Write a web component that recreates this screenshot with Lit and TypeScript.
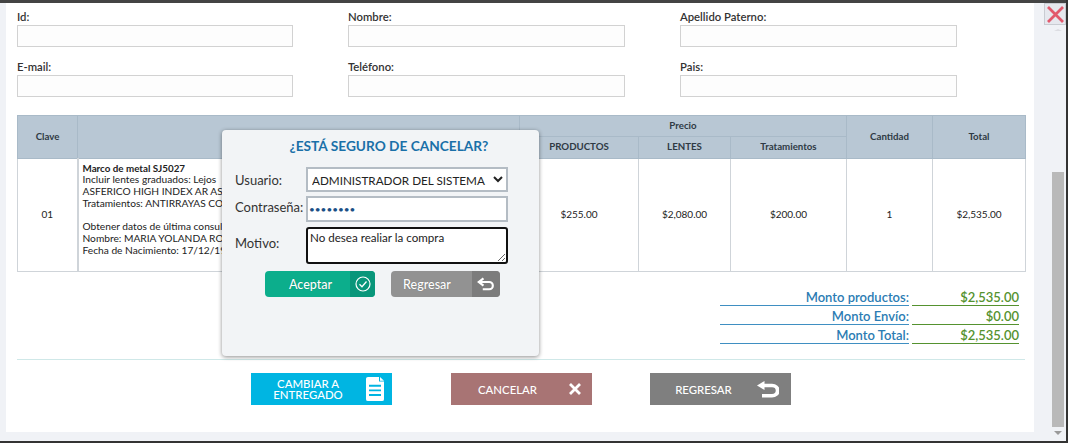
import { LitElement, html, css, svg } from "lit";
import { customElement } from "lit/decorators.js";

const backArrow = (color: string, w: number) => svg`<svg class="ico" width="${w}" height="${w * 0.8}" viewBox="0 0 25 20" fill="none"><path d="M9 2 L2.5 7 L9 12" fill="none" stroke="${color}" stroke-width="3" stroke-linejoin="miter"/><path d="M4 7 H17 a5 5 0 0 1 0 10 H8" fill="none" stroke="${color}" stroke-width="3"/></svg>`;

@customElement("app-root")
export class AppRoot extends LitElement {
  static styles = css`
    :host { display: block; width: 1068px; height: 443px; position: relative; overflow: hidden; background: #f0f2f6; font-family: Lato, "Open Sans", sans-serif; color: #222; }
    * { box-sizing: border-box; }
    .top { height: 3px; background: #444; }
    .bottom { position: absolute; left: 0; right: 0; bottom: 0; height: 2px; background: #333; }
    .edge { position: absolute; top: 0; right: 0; bottom: 0; width: 2px; background: #333; }
    .panel { margin-left: 6px; width: 1028px; height: 429px; background: #fff; padding: 8px 9px 0 11px; }
    .form { display: grid; grid-template-columns: 276px 277px 277px; column-gap: 55px; row-gap: 6px; }
    .field { display: flex; flex-direction: column; height: 44px; }
    .field label { font-size: 11.3px; line-height: 12px; font-weight: 600; color: #333; height: 14px; }
    .field input { width: 100%; height: 22px; border: 1.5px solid #d2d2d2; background: #fdfdfd; outline: none; }
    table { margin-top: 10px; width: 1008px; border-collapse: collapse; table-layout: fixed; border: 1px solid #cfd4d9; font-size: 10px; }
    th { background: #b8c7d4; font-weight: 700; color: #2f3a44; font-size: 9.7px; border: 1px solid #a9bac8; padding: 0 0 2px; height: 21.3px; }
    td { border: 1px solid #cfd4d9; text-align: center; color: #222; font-size: 10px; height: 113px; padding: 0 0 2px; }
    td.desc { text-align: left; padding: 4px 5px 0 4px; vertical-align: top; font-size: 10.2px; line-height: 11.7px; border-left-width: 2px; white-space: nowrap; overflow: hidden; }
    td.desc b { font-weight: 700; font-size: 9.8px; }
    .summary { display: grid; grid-template-columns: 189px 107px; column-gap: 3px; justify-content: end; margin: 15px 6px 0 0; font-size: 13px; font-weight: 600; }
    .summary div { height: 19.3px; line-height: 20px; text-align: right; }
    .k { color: #2b7cb3; border-bottom: 1px solid #3f8fc2; }
    .v { color: #55922f; border-bottom: 1px solid #55922f; }
    hr { border: 0; height: 1px; background: #cfe8e8; margin: 15px 0 0; }
    .actions { display: flex; margin: 13px 0 0 234px; gap: 58.5px; }
    .act { width: 141px; height: 32px; display: flex; align-items: center; color: #fff; font-size: 11.4px; font-weight: 500; border: 0; padding: 0; font-family: inherit; }
    .act span { flex: 1; text-align: center; line-height: 11.5px; padding-left: 7px; }
    .act .slot { flex: none; width: 34px; display: flex; justify-content: center; }
    .act .wide { width: 41px; padding-right: 6px; }
    .blue { background: #00b5e2; }
    .red { background: #a87474; }
    .gray { background: #7f7f7f; }
    .dialog { position: absolute; left: 222px; top: 130px; width: 317px; height: 226px; background: #f2f4f6; border-radius: 4px; box-shadow: 0 1px 4px rgba(0,0,0,.45); padding: 0 31px 0 13px; }
    h2 { margin: 7px 0 0; font-size: 13.7px; line-height: 18px; font-weight: 700; color: #1a70a8; text-align: center; padding-left: 35px; white-space: nowrap; }
    .row { display: flex; align-items: center; }
    .row label { width: 71px; font-size: 13px; color: #333; flex: none; }
    .r1 { margin-top: 12px; height: 25px; }
    .r2 { margin-top: 4px; height: 26px; }
    .r2 label { padding-bottom: 4px; }
    .r3 { margin-top: 5px; height: 37px; }
    .r3 label { padding-bottom: 6px; }
    .sel { flex: 1; min-width: 0; height: 25px; border: 2px solid #b4bcc4; background: #fff; font: 11.7px Lato, sans-serif; color: #222; padding: 0; border-radius: 0; }
    .pw { flex: 1; min-width: 0; height: 26px; border: 2px solid #b4bcc4; background: #fff; font: 10px Lato, sans-serif; color: #1a4f86; padding: 0 0 0 1px; outline: none; }
    textarea { flex: 1; min-width: 0; height: 37px; border: 2px solid #111; border-radius: 3px; background: #fff; font: 11.6px/14px Lato, sans-serif; color: #222; padding: 2px 2px 0; outline: none; }
    .btns { display: flex; margin: 7px 0 0 30px; gap: 16px; }
    .b { height: 26px; border-radius: 4px; border: 0; display: flex; align-items: stretch; padding: 0; color: #fff; font: 500 12.5px Lato, sans-serif; overflow: hidden; text-shadow: 0 0 1px rgba(0,0,0,.3); flex: none; }
    .b span { flex: 1; display: flex; align-items: center; justify-content: center; }
    .b i { flex: none; display: flex; align-items: center; justify-content: center; width: 25px; }
    .ok { width: 110px; background: #0cae8c; }
    .ok span { padding-left: 6px; }
    .ok i { background: #09967a; }
    .back { width: 109px; background: #929292; }
    .back span { padding-right: 9px; }
    .back i { width: 28px; background: #7c7c7c; }
    .close { position: absolute; left: 1044px; top: 3px; width: 22px; height: 22px; background: #e6e8ee; border: 1px solid #c9ccd2; display: flex; align-items: center; justify-content: center; padding: 0; }
    .bar { position: absolute; left: 1052px; top: 172px; width: 12px; height: 255px; background: #b9b9b9; }
    .up, .down { position: absolute; left: 1054px; width: 0; height: 0; border-left: 4px solid transparent; border-right: 4px solid transparent; }
    .up { top: 29px; border-bottom: 2px solid #dcdde2; }
    .down { top: 431px; border-top: 4px solid #9a9a9a; }
    .ico { display: block; }
  `;

  render() {
    const fields = ["Id:", "Nombre:", "Apellido Paterno:", "E-mail:", "Teléfono:", "Pais:"];
    return html`
      <div class="top"></div>
      <div class="panel">
        <div class="form">
          ${fields.map((f) => html`<div class="field"><label>${f}</label><input /></div>`)}
        </div>
        <table>
          <colgroup>
            <col style="width:60px" /><col style="width:442px" /><col style="width:119px" /><col style="width:92px" /><col style="width:116px" /><col style="width:86px" /><col style="width:93px" />
          </colgroup>
          <thead>
            <tr><th rowspan="2">Clave</th><th rowspan="2"></th><th colspan="3">Precio</th><th rowspan="2">Cantidad</th><th rowspan="2">Total</th></tr>
            <tr><th>PRODUCTOS</th><th>LENTES</th><th>Tratamientos</th></tr>
          </thead>
          <tbody>
            <tr>
              <td>01</td>
              <td class="desc"><b>Marco de metal SJ5027</b><br />Incluir lentes graduados: Lejos<br />ASFERICO HIGH INDEX AR ASFERICO<br />Tratamientos: ANTIRRAYAS COMPUTADORA<br /><br />Obtener datos de última consulta<br />Nombre: MARIA YOLANDA ROMERO<br />Fecha de Nacimiento: 17/12/1950</td>
              <td>$255.00</td><td>$2,080.00</td><td>$200.00</td><td>1</td><td>$2,535.00</td>
            </tr>
          </tbody>
        </table>
        <div class="summary">
          <div class="k">Monto productos:</div><div class="v">$2,535.00</div>
          <div class="k">Monto Envío:</div><div class="v">$0.00</div>
          <div class="k">Monto Total:</div><div class="v">$2,535.00</div>
        </div>
        <hr />
        <div class="actions">
          <button class="act blue"><span>CAMBIAR A<br />ENTREGADO</span><div class="slot">
            <svg class="ico" width="18" height="24" viewBox="0 0 18 26" preserveAspectRatio="none"><path d="M2 0 H13 V5 H18 V24 a2 2 0 0 1 -2 2 H2 a2 2 0 0 1 -2 -2 V2 a2 2 0 0 1 2 -2 Z" fill="#fff"/><path d="M14 0 L18 4 H14 Z" fill="#fff"/><path d="M3 9.5 H15 M3 14.5 H15 M3 19.5 H15" stroke="#00b5e2" stroke-width="2"/></svg>
          </div></button>
          <button class="act red"><span>CANCELAR</span><div class="slot">
            <svg class="ico" width="12" height="12" viewBox="0 0 12 12"><path d="M1 1 L11 11 M11 1 L1 11" stroke="#fff" stroke-width="2.8"/></svg>
          </div></button>
          <button class="act gray"><span>REGRESAR</span><div class="slot wide">
            <svg class="ico" width="22" height="17" viewBox="0 0 22 19" preserveAspectRatio="none"><path d="M7.5 0 V10 L0 5 Z" fill="#fff"/><path d="M6 5 H15 a5.5 5.5 0 0 1 0 11.5 H5" fill="none" stroke="#fff" stroke-width="4"/></svg>
          </div></button>
        </div>
      </div>
      <div class="bottom"></div>
      <div class="edge"></div>
      <div class="bar"></div>
      <div class="up"></div>
      <div class="down"></div>
      <button class="close" aria-label="Cerrar">
        <svg class="ico" width="17" height="17" viewBox="0 0 17 17"><path d="M1 1 L16 16 M16 1 L1 16" stroke="#e2596c" stroke-width="2.8"/></svg>
      </button>
      <div class="dialog">
        <h2>¿ESTÁ SEGURO DE CANCELAR?</h2>
        <div class="row r1"><label>Usuario:</label><select class="sel"><option>ADMINISTRADOR DEL SISTEMA</option></select></div>
        <div class="row r2"><label>Contraseña:</label><input class="pw" type="password" value="12345678" /></div>
        <div class="row r3"><label>Motivo:</label><textarea>No desea realiar la compra</textarea></div>
        <div class="btns">
          <button class="b ok"><span>Aceptar</span><i><svg class="ico" width="16" height="16" viewBox="0 0 16 16" fill="none"><circle cx="8" cy="8" r="7" stroke="#fff" stroke-width="1.2"/><path d="M4.5 8.2 L7 10.7 L11.5 5.5" stroke="#fff" stroke-width="1.3"/></svg></i></button>
          <button class="b back"><span>Regresar</span><i>${backArrow("#fff", 18)}</i></button>
        </div>
      </div>
    `;
  }
}
